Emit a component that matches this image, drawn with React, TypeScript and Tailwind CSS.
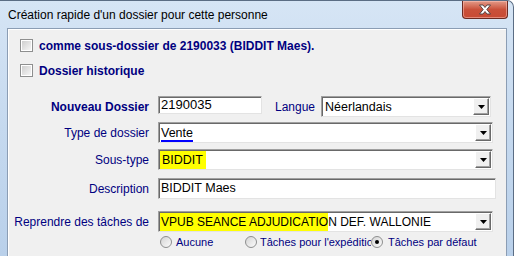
import React from "react";

const FF = { fontFamily: '"Liberation Sans", Arial, sans-serif' };

function Checkbox() {
  return (
    <div className="w-[13px] h-[13px] border border-[#8e8f8f] bg-white p-[1px] shrink-0">
      <div className="w-full h-full bg-gradient-to-br from-[#cfcfcf] to-[#f6f6f6]" />
    </div>
  );
}

function Radio({ checked = false }: { checked?: boolean }) {
  return (
    <div className="w-[12px] h-[12px] rounded-full border border-[#8e8f8f] bg-gradient-to-br from-[#d4d4d4] to-[#fbfbfb] flex items-center justify-center shrink-0">
      {checked && <div className="w-[4px] h-[4px] rounded-full bg-black" />}
    </div>
  );
}

function DropButton() {
  return (
    <div className="w-[16px] h-[17px] bg-[#f0f0f0] border border-t-white border-l-white border-r-[#696969] border-b-[#696969] shadow-[inset_-1px_-1px_0_#a0a0a0] flex items-center justify-center shrink-0">
      <svg width="7" height="4" viewBox="0 0 7 4">
        <path d="M0 0 H7 L3.5 4 Z" fill="#000" />
      </svg>
    </div>
  );
}

function Combo({ children, className = "" }: { children: React.ReactNode; className?: string }) {
  return (
    <div
      className={`h-[21px] bg-white border border-t-[#a0a0a0] border-l-[#a0a0a0] border-r-[#e3e3e3] border-b-[#e3e3e3] shadow-[inset_1px_1px_0_#696969] flex items-center pl-[1px] pr-[1px] ${className}`}
    >
      <div className="flex-1 h-full flex items-center overflow-hidden whitespace-nowrap text-[12.5px] text-black pt-[1px]">
        {children}
      </div>
      <DropButton />
    </div>
  );
}

function TextBox({ children, className = "" }: { children: React.ReactNode; className?: string }) {
  return (
    <div
      className={`bg-white border border-t-[#a0a0a0] border-l-[#a0a0a0] border-r-[#e3e3e3] border-b-[#e3e3e3] shadow-[inset_1px_1px_0_#696969] flex items-center pl-[2px] text-black whitespace-nowrap overflow-hidden ${className}`}
    >
      {children}
    </div>
  );
}

function Label({ children, bold = false }: { children: React.ReactNode; bold?: boolean }) {
  return (
    <div className={`w-[141px] shrink-0 text-right text-[12px] text-[#000080] whitespace-nowrap ${bold ? "font-bold" : ""}`}>
      {children}
    </div>
  );
}

export default function App() {
  return (
    <div className="w-[516px] h-[256px] overflow-hidden bg-white" style={FF}>
      <div className="w-[514px] h-[256px] rounded-tr-[7px] border-t border-r border-[#5b6d84] bg-gradient-to-b from-[#d6e5f5] via-[#c5d9ef] to-[#b9d0ea] flex flex-col pl-[7px] pr-[6px]">
        <div className="h-[27px] flex items-start justify-between shrink-0">
          <span className="pl-[1px] pt-[7px] text-[12px] leading-[15px] text-black">
            Création rapide d'un dossier pour cette personne
          </span>
          <div className="mt-[0px] mr-[-1px] w-[46px] h-[18px] rounded-b-[4px] border border-t-0 border-[#6b2a22] bg-gradient-to-b from-[#e29a88] via-[#c9503a] to-[#c84a34] shadow-[inset_0_0_0_1px_rgba(255,200,190,0.5)] flex items-center justify-center">
            <svg width="14" height="11" viewBox="0 0 14 11">
              <path
                d="M1.5 1 L5 1 L7 3.5 L9 1 L12.5 1 L8.8 5.5 L12.5 10 L9 10 L7 7.5 L5 10 L1.5 10 L5.2 5.5 Z"
                fill="#ffffff"
                stroke="#4a3b3b"
                strokeWidth="0.9"
                strokeLinejoin="round"
              />
            </svg>
          </div>
        </div>
        <div className="flex-1 bg-[#f0f0f0] border-t border-l border-r border-[#8b9db4] shadow-[inset_1px_1px_0_#ffffff] flex flex-col">
          <div className="pt-[10px] pl-[12px] flex flex-col gap-[12px]">
            <div className="flex items-center gap-[6px] h-[13px]">
              <Checkbox />
              <span className="text-[12px] font-bold text-[#000080] whitespace-nowrap">
                comme sous-dossier de 2190033 (BIDDIT Maes).
              </span>
            </div>
            <div className="flex items-center gap-[6px] h-[13px]">
              <Checkbox />
              <span className="text-[12px] font-bold text-[#000080] whitespace-nowrap">Dossier historique</span>
            </div>
          </div>

          <div className="flex flex-col mt-[19px]">
            <div className="flex items-center gap-[9px] h-[21px]">
              <Label bold>Nouveau Dossier</Label>
              <TextBox className="w-[104px] h-[18px] self-start text-[13px]">2190035</TextBox>
              <span className="ml-[4px] text-[12px] text-[#000080]">Langue</span>
              <Combo className="ml-[-3px] w-[170px]">
                <span className="pl-[2px]">Néerlandais</span>
              </Combo>
            </div>

            <div className="flex items-center gap-[9px] h-[21px] mt-[5px]">
              <Label>Type de dossier</Label>
              <Combo className="w-[335px]">
                <span className="pl-[1px] underline decoration-[#0000ff] decoration-[1.5px] underline-offset-[3px]">Vente</span>
              </Combo>
            </div>

            <div className="flex items-center gap-[9px] h-[21px] mt-[6px]">
              <Label>Sous-type</Label>
              <Combo className="w-[335px]">
                <span className="h-full flex items-center bg-[#ffff00] pl-[2px] pr-[3px]">BIDDIT</span>
              </Combo>
            </div>

            <div className="flex items-center gap-[9px] h-[21px] mt-[8px]">
              <Label>Description</Label>
              <TextBox className="w-[338px] h-[21px] text-[12.5px]">BIDDIT Maes</TextBox>
            </div>

            <div className="flex items-center gap-[9px] h-[21px] mt-[12px]">
              <Label>Reprendre des tâches de</Label>
              <Combo className="w-[335px]">
                <span className="h-full flex items-center bg-[#ffff00] pl-[1px] text-[12px]">VPUB SEANCE ADJUDICATIO</span>
                <span className="text-[12px]">N DEF. WALLONIE</span>
              </Combo>
            </div>

            <div className="flex items-center h-[12px] mt-[4px] pl-[152px] text-[11px] text-[#000080] whitespace-nowrap">
              <Radio />
              <span className="ml-[4px] w-[69px]">Aucune</span>
              <Radio />
              <span className="ml-[3px] w-[111px] overflow-hidden">Tâches pour l'expédition</span>
              <Radio checked />
              <span className="ml-[5px]">Tâches par défaut</span>
            </div>
          </div>
        </div>
      </div>
    </div>
  );
}
